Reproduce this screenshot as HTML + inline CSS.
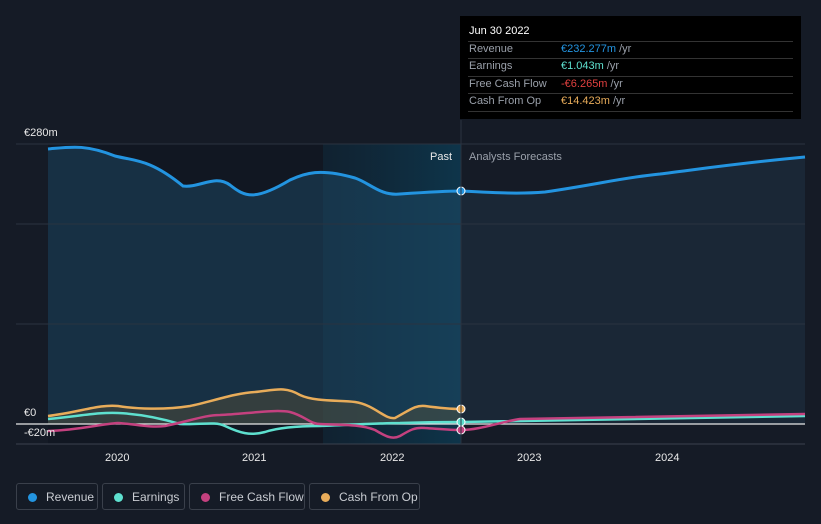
<!DOCTYPE html><html><head><style>body{margin:0;background:#151b26;font-family:"Liberation Sans",sans-serif;}
.lg{position:absolute;top:483px;height:27px;border:1px solid #3a404b;border-radius:3px;color:#c9ccd2;font-size:12px;line-height:27px;box-sizing:border-box;padding-left:29px}
.lg i{position:absolute;left:11px;top:9px;width:9px;height:9px;border-radius:50%}
</style></head><body><div style="position:relative;width:821px;height:524px;overflow:hidden">
<svg width="821" height="524" style="position:absolute;left:0;top:0">
<defs><linearGradient id="hl" x1="0" x2="1"><stop offset="0" stop-color="#0e3a52" stop-opacity=".3"/><stop offset="1" stop-color="#0c4560" stop-opacity=".65"/></linearGradient></defs>
<rect x="48" y="144" width="413" height="300" fill="#111722"/>
<rect x="323" y="144" width="138" height="300" fill="url(#hl)"/>
<path d="M48,149 C70,147 85,144 115,156 C135,161 150,159 183,186 C200,188 215,174 230,185 C245,197 255,201 290,180 C305,173 320,168 355,178 C370,183 380,196 400,194 C430,192 445,191 461,191 L461,424 L48,424Z" fill="#1d4a66" fill-opacity=".5"/>
<path d="M461,191 C500,193 520,194 545,192 C600,184 620,178 660,174 C700,169 740,163 805,157 L805,424 L461,424Z" fill="#1b2a3b" fill-opacity=".8"/>
<g stroke="#2a3340" stroke-width="1"><line x1="16" y1="144" x2="805" y2="144"/><line x1="16" y1="224" x2="805" y2="224"/><line x1="16" y1="324" x2="805" y2="324"/><line x1="16" y1="444" x2="805" y2="444" stroke="#3a424e"/></g>
<path d="M48,416 C80,412 100,404 118,406 C135,409 165,410 190,406 C210,402 235,393 255,392 C275,390 285,386 300,395 C315,402 340,400 355,402 C375,405 385,420 395,418 C410,410 415,405 425,406 C440,408 450,409 461,409 L461,424 L48,424Z" fill="#6b5a35" fill-opacity=".35"/>
<line x1="16" y1="424" x2="805" y2="424" stroke="#e8e8e8" stroke-width="1.2"/>
<path d="M48,149 C70,147 85,144 115,156 C135,161 150,159 183,186 C200,188 215,174 230,185 C245,197 255,201 290,180 C305,173 320,168 355,178 C370,183 380,196 400,194 C430,192 445,191 461,191 C500,193 520,194 545,192 C600,184 620,178 660,174 C700,169 740,163 805,157" fill="none" stroke="#2394e0" stroke-width="3"/>
<path d="M48,416 C80,412 100,404 118,406 C135,409 165,410 190,406 C210,402 235,393 255,392 C275,390 285,386 300,395 C315,402 340,400 355,402 C375,405 385,420 395,418 C410,410 415,405 425,406 C440,408 450,409 461,409" fill="none" stroke="#e8ac5a" stroke-width="2.5"/>
<path d="M48,419 C80,416 100,412 118,413 C140,414 160,418 180,424 C200,425 215,421 225,426 C240,433 250,436 265,432 C280,427 300,426 320,426 C350,425 380,423 400,423 C430,422 450,422 461,422 C600,420 700,418 805,416" fill="none" stroke="#5ee0cf" stroke-width="2.5"/>
<path d="M48,431 C80,430 100,424 118,423 C135,424 150,428 165,426 C190,421 205,415 220,415 C245,414 275,409 290,412 C305,416 310,424 320,424 C340,425 360,424 375,430 C385,436 392,440 400,436 C410,430 415,427 425,428 C440,429 450,430 461,430 C480,430 500,422 520,419 C600,417 700,415 805,414" fill="none" stroke="#c4417f" stroke-width="2.5"/>
<circle cx="461" cy="191" r="4" fill="#2394e0" stroke="#fff" stroke-width="1"/>
<circle cx="461" cy="409" r="4" fill="#e8ac5a" stroke="#fff" stroke-width="1"/>
<circle cx="461" cy="422" r="4" fill="#5ee0cf" stroke="#fff" stroke-width="1"/>
<circle cx="461" cy="430" r="4" fill="#c4417f" stroke="#fff" stroke-width="1"/>
<line x1="461" y1="120" x2="461" y2="444" stroke="#2a3340"/>
<g font-size="11" fill="#e8e8e8"><text x="24" y="136">€280m</text><text x="24" y="416">€0</text><text x="24" y="436">-€20m</text>
<text x="105" y="461">2020</text><text x="242" y="461">2021</text><text x="380" y="461">2022</text><text x="517" y="461">2023</text><text x="655" y="461">2024</text>
<text x="430" y="160">Past</text><text x="469" y="160" fill="#9aa0aa">Analysts Forecasts</text></g>
</svg>
<div style="position:absolute;left:460px;top:16px;width:341px;height:103px;background:#000;font-size:11px;color:#9aa0aa">
<div style="position:absolute;left:9px;top:9px;color:#fff">Jun 30 2022</div>
<div style="position:absolute;left:8px;right:8px;top:25px;border-top:1px solid #333"></div>
<div style="position:absolute;left:8px;right:8px;top:42px;border-top:1px solid #333"></div>
<div style="position:absolute;left:8px;right:8px;top:60px;border-top:1px solid #333"></div>
<div style="position:absolute;left:8px;right:8px;top:77px;border-top:1px solid #333"></div>
<div style="position:absolute;left:8px;right:8px;top:95px;border-top:1px solid #333"></div>
<div style="position:absolute;left:9px;top:27px">Revenue</div><div style="position:absolute;left:101px;top:27px"><span style="color:#2394e0">€232.277m</span> /yr</div>
<div style="position:absolute;left:9px;top:44px">Earnings</div><div style="position:absolute;left:101px;top:44px"><span style="color:#5ee0cf">€1.043m</span> /yr</div>
<div style="position:absolute;left:9px;top:62px">Free Cash Flow</div><div style="position:absolute;left:101px;top:62px"><span style="color:#e0403f">-€6.265m</span> /yr</div>
<div style="position:absolute;left:9px;top:79px">Cash From Op</div><div style="position:absolute;left:101px;top:79px"><span style="color:#e8ac5a">€14.423m</span> /yr</div>
</div>
<div class="lg" style="left:16px;width:82px"><i style="background:#2394e0"></i>Revenue</div>
<div class="lg" style="left:102px;width:83px"><i style="background:#5ee0cf"></i>Earnings</div>
<div class="lg" style="left:189px;width:116px"><i style="background:#c4417f"></i>Free Cash Flow</div>
<div class="lg" style="left:309px;width:111px"><i style="background:#e8ac5a"></i>Cash From Op</div>
</div></body></html>
